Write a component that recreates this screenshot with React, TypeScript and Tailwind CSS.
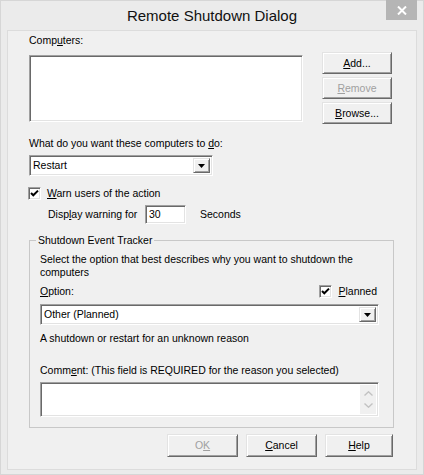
import React from 'react';

// classic win32 3D edges
const sunken =
  'bg-white border border-t-[#a0a0a0] border-l-[#a0a0a0] border-r-white border-b-white shadow-[inset_1px_1px_0_#696969,inset_-1px_-1px_0_#e3e3e3]';
const raised =
  'bg-[#f0f0f0] border border-t-[#e3e3e3] border-l-[#e3e3e3] border-r-[#696969] border-b-[#696969] shadow-[inset_1px_1px_0_#ffffff,inset_-1px_-1px_0_#a0a0a0]';

const Key: React.FC<{ children: React.ReactNode }> = ({ children }) => (
  <span className="underline underline-offset-[1px]">{children}</span>
);

const Button: React.FC<{ w: string; disabled?: boolean; children: React.ReactNode }> = ({ w, disabled, children }) => (
  <div className={`${raised} ${w} h-[22px] flex items-center justify-center ${disabled ? 'text-[#a0a0a0]' : 'text-black'}`}>
    {children}
  </div>
);

const Checkbox: React.FC = () => (
  <div className={`${sunken} w-[13px] h-[13px] flex items-center justify-center shrink-0`}>
    <svg width="9" height="9" viewBox="0 0 9 9">
      <path d="M1 4 L3.3 6.3 L8 1.6" stroke="#000" strokeWidth="2" fill="none" />
    </svg>
  </div>
);

const Select: React.FC<{ w: string; value: string }> = ({ w, value }) => (
  <div className={`${sunken} ${w} h-[21px] flex items-stretch p-[2px]`}>
    <div className="flex-1 flex items-center pl-[1px]">{value}</div>
    <div className={`${raised} w-[17px] flex items-center justify-center`}>
      <svg width="7" height="4" viewBox="0 0 7 4">
        <path d="M0 0 H7 L3.5 4 Z" fill="#000" />
      </svg>
    </div>
  </div>
);

export default function App() {
  return (
    <div className="w-[424px] h-[475px] bg-[#ebebeb] border border-[#d6d6d6] flex flex-col font-['Liberation_Sans',Arial,sans-serif] text-[10.5px] leading-[13px] text-black">
      {/* Title bar */}
      <div className="relative h-[29px] flex items-center justify-center">
        <span className="text-[15px] leading-[20px] text-[#111] mt-[1px]">Remote Shutdown Dialog</span>
        <div className="absolute right-[6px] top-[-1px] w-[31px] h-[20px] bg-[#b5b5b5] flex items-center justify-center">
          <svg width="10" height="9" viewBox="0 0 10 9">
            <path d="M1 0.5 L9 8.5 M9 0.5 L1 8.5" stroke="#fff" strokeWidth="2" />
          </svg>
        </div>
      </div>

      {/* Client area */}
      <div className="mx-[6px] h-[440px] border border-[#dcdcdc] bg-[#f0f0f0] pl-[21px] pr-[23px] pt-[3px] flex flex-col">
        <div>
          Comp<Key>u</Key>ters:
        </div>

        <div className="mt-[5px] flex justify-between items-start">
          <div className={`${sunken} mt-[3px] w-[274px] h-[67px]`} />
          <div className="flex flex-col gap-[3px] mr-[1px]">
            <Button w="w-[70px]">
              <Key>A</Key>dd...
            </Button>
            <Button w="w-[70px]" disabled>
              <Key>R</Key>emove
            </Button>
            <Button w="w-[70px]">
              <Key>B</Key>rowse...
            </Button>
          </div>
        </div>

        <div className="mt-[13px]">
          What do you want these computers to <Key>d</Key>o:
        </div>
        <div className="mt-[5px]">
          <Select w="w-[184px]" value="Restart" />
        </div>

        <div className="mt-[11px] flex items-center gap-[6px] h-[13px] -ml-[1px]">
          <Checkbox />
          <span>
            <Key>W</Key>arn users of the action
          </span>
        </div>

        <div className="mt-[5px] flex items-center h-[19px] pl-[19px]">
          <span className="w-[97px]">
            Disp<Key>l</Key>ay warning for
          </span>
          <div className={`${sunken} w-[41px] h-[19px] flex items-center pl-[3px]`}>30</div>
          <span className="ml-[14px]">Seconds</span>
        </div>

        {/* Shutdown Event Tracker group */}
        <fieldset className="mt-[10px] border border-[#c8c8c8] pl-[10px] pr-[14px] pb-[10px] mr-[-1px]">
          <legend className="-ml-[4px] px-[2px]">Shutdown Event Tracker</legend>
          <p className="mt-[6px] pr-[8px]">
            Select the option that best describes why you want to shutdown the computers
          </p>
          <div className="mt-[6px] flex justify-between items-center h-[13px]">
            <span>
              <Key>O</Key>ption:
            </span>
            <div className="flex items-center gap-[6px] mr-[2px]">
              <Checkbox />
              <span>
                <Key>P</Key>lanned
              </span>
            </div>
          </div>
          <div className="mt-[6px]">
            <Select w="w-full" value="Other (Planned)" />
          </div>
          <div className="mt-[7px]">A shutdown or restart for an unknown reason</div>
          <div className="mt-[19px]">
            Comm<Key>e</Key>nt: (This field is REQUIRED for the reason you selected)
          </div>
          <div className={`${sunken} mt-[5px] h-[35px] flex justify-end p-[2px]`}>
            <div className="w-[16px] bg-[#f0f0f0] flex flex-col items-center justify-between py-[6px]">
              <svg width="9" height="5" viewBox="0 0 9 5">
                <path d="M0.5 4.5 L4.5 0.8 L8.5 4.5" stroke="#c2c2c2" strokeWidth="1.4" fill="none" />
              </svg>
              <svg width="9" height="5" viewBox="0 0 9 5">
                <path d="M0.5 0.5 L4.5 4.2 L8.5 0.5" stroke="#c2c2c2" strokeWidth="1.4" fill="none" />
              </svg>
            </div>
          </div>
        </fieldset>

        <div className="mt-[6px] flex justify-end">
          <Button w="w-[71px] h-[23px]" disabled>
            O<Key>K</Key>
          </Button>
          <div className="ml-[8px]">
            <Button w="w-[71px] h-[23px]">
              <Key>C</Key>ancel
            </Button>
          </div>
          <div className="ml-[8px]">
            <Button w="w-[68px] h-[23px]">
              <Key>H</Key>elp
            </Button>
          </div>
        </div>
      </div>
    </div>
  );
}
